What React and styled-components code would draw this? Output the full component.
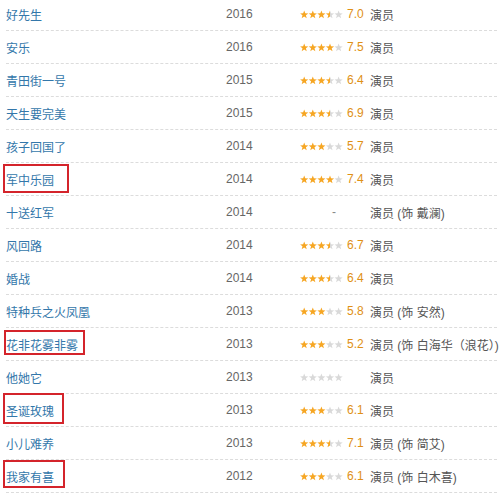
import React, { useId } from "react";
import styled, { createGlobalStyle } from "styled-components";

const Global = createGlobalStyle`
  html, body { margin: 0; padding: 0; background: #fff; }
  body { font-family: "Liberation Sans", "Noto Sans CJK SC", sans-serif; overflow: hidden; }
`;

const Page = styled.div`
  width: 500px;
  height: 495px;
  overflow: hidden;
  padding: 0 3px 0 6px;
  box-sizing: border-box;
`;

const List = styled.div`
  margin-top: -2px;
  display: flex;
  flex-direction: column;
`;

const Row = styled.div`
  position: relative;
  display: grid;
  grid-template-columns: 220px 74px 70px 1fr;
  align-items: center;
  height: 32px;
  border-bottom: 1px dashed #dcdcdc;
  font-size: 12px;
  white-space: nowrap;
`;

const Title = styled.a`
  color: #3377aa;
  text-decoration: none;
`;

const Year = styled.span`
  color: #666;
`;

const RatingCell = styled.span`
  display: flex;
  align-items: center;
`;

const Score = styled.span`
  color: #e09015;
  margin-left: 4px;
`;

const Dash = styled.span`
  color: #888;
  padding-left: 32px;
`;

const Role = styled.span`
  color: #555;
`;

const Mark = styled.span`
  position: absolute;
  border: 2px solid #d4242b;
  box-sizing: border-box;
  pointer-events: none;
`;

const starPoints = (cx, cy, R, r) => {
  const pts = [];
  for (let i = 0; i < 10; i++) {
    const rad = i % 2 === 0 ? R : r;
    const a = -Math.PI / 2 + (i * Math.PI) / 5;
    pts.push(`${(cx + rad * Math.cos(a)).toFixed(2)},${(cy + rad * Math.sin(a)).toFixed(2)}`);
  }
  return pts.join(" ");
};

const ON = "#f6a623";
const OFF = "#d9d9d9";

function Stars({ value }) {
  const id = useId().replace(/:/g, "");
  const pitch = 8.6;
  return (
    <svg width="43" height="9" viewBox="0 0 43 9" style={{ display: "block" }}>
      <defs>
        <linearGradient id={`h${id}`} x1="0" x2="1" y1="0" y2="0">
          <stop offset="50%" stopColor={ON} />
          <stop offset="50%" stopColor={OFF} />
        </linearGradient>
      </defs>
      {[0, 1, 2, 3, 4].map((i) => {
        const f = value - i;
        const fill = f >= 1 ? ON : f >= 0.5 ? `url(#h${id})` : OFF;
        return (
          <polygon key={i} points={starPoints(4.2 + i * pitch, 4.8, 4.3, 1.8)} fill={fill} />
        );
      })}
    </svg>
  );
}

const data = [
  { t: "好先生", y: 2016, s: 3.5, r: "7.0", role: "演员" },
  { t: "安乐", y: 2016, s: 4, r: "7.5", role: "演员" },
  { t: "青田街一号", y: 2015, s: 3.5, r: "6.4", role: "演员" },
  { t: "天生要完美", y: 2015, s: 3.5, r: "6.9", role: "演员" },
  { t: "孩子回国了", y: 2014, s: 3, r: "5.7", role: "演员" },
  { t: "军中乐园", y: 2014, s: 4, r: "7.4", role: "演员", mark: { top: 1, left: -3, width: 66, height: 29 } },
  { t: "十送红军", y: 2014, dash: true, role: "演员 (饰 戴澜)" },
  { t: "风回路", y: 2014, s: 3.5, r: "6.7", role: "演员" },
  { t: "婚战", y: 2014, s: 3.5, r: "6.4", role: "演员" },
  { t: "特种兵之火凤凰", y: 2013, s: 3, r: "5.8", role: "演员 (饰 安然)" },
  { t: "花非花雾非雾", y: 2013, s: 3, r: "5.2", role: "演员 (饰 白海华（浪花）)", mark: { top: 2, left: -2, width: 81, height: 25 } },
  { t: "他她它", y: 2013, s: 0, r: "", role: "演员" },
  { t: "圣诞玫瑰", y: 2013, s: 3, r: "6.1", role: "演员", mark: { top: -1, left: -3, width: 61, height: 31 } },
  { t: "小儿难养", y: 2013, s: 3.5, r: "7.1", role: "演员 (饰 简艾)" },
  { t: "我家有喜", y: 2012, s: 3, r: "6.1", role: "演员 (饰 白木喜)", mark: { top: 0, left: -3, width: 62, height: 28 } },
];

export default function App() {
  return (
    <>
      <Global />
      <Page>
        <List>
          {data.map((d) => (
            <Row key={d.t}>
              <Title href="#">{d.t}</Title>
              <Year>{d.y}</Year>
              <RatingCell>
                {d.dash ? (
                  <Dash>-</Dash>
                ) : (
                  <>
                    <Stars value={d.s} />
                    {d.r && <Score>{d.r}</Score>}
                  </>
                )}
              </RatingCell>
              <Role>{d.role}</Role>
              {d.mark && (
                <Mark
                  style={{
                    top: d.mark.top,
                    left: d.mark.left,
                    width: d.mark.width,
                    height: d.mark.height,
                  }}
                />
              )}
            </Row>
          ))}
        </List>
      </Page>
    </>
  );
}
